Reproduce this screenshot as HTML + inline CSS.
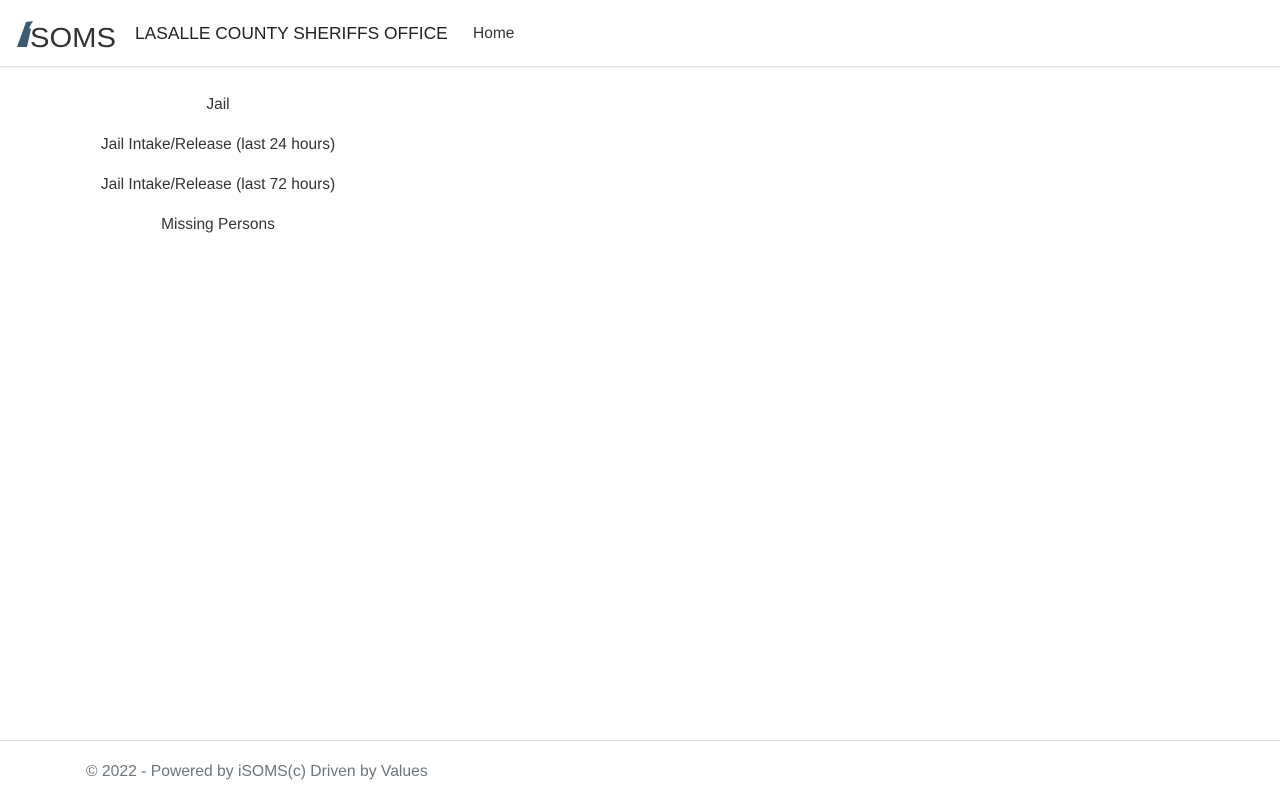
<!DOCTYPE html>
<html><head><style>
body{margin:0;font-family:"Liberation Sans",sans-serif;color:#212529;background:#fff;}
.nav{height:66px;border-bottom:1px solid #dee2e6;box-shadow:0 1px 3px rgba(0,0,0,.06);position:relative;}
.logo{position:absolute;left:16px;top:18px;}
.title{position:absolute;left:135px;top:23px;font-size:17.4px;color:#222;white-space:nowrap;}
.home{position:absolute;left:473px;top:25px;font-size:15.5px;color:#333;}
.item{position:absolute;width:436px;text-align:center;font-size:15.5px;color:#333;}
.foot{position:absolute;top:740px;left:0;right:0;border-top:1px solid #dee2e6;height:60px;}
.foot span{position:absolute;left:86px;top:22px;font-size:15.7px;color:#6c757d;white-space:nowrap;}
</style></head><body>
<div class="nav">
<svg class="logo" width="102" height="30" viewBox="0 0 102 30">
<polygon points="1,29 10,4 17,3 13,10 15,11 11,29" fill="#3d5a73"/>
<text x="14" y="29" font-family="Liberation Sans" font-size="28" fill="#333" textLength="86" lengthAdjust="spacingAndGlyphs">SOMS</text>
</svg>
<div class="title">LASALLE COUNTY SHERIFFS OFFICE</div>
<div class="home">Home</div>
</div>
<div class="item" style="top:96px">Jail</div>
<div class="item" style="top:136px">Jail Intake/Release (last 24 hours)</div>
<div class="item" style="top:176px">Jail Intake/Release (last 72 hours)</div>
<div class="item" style="top:216px">Missing Persons</div>
<div class="foot"><span>© 2022 - Powered by iSOMS(c) Driven by Values</span></div>
</body></html>
